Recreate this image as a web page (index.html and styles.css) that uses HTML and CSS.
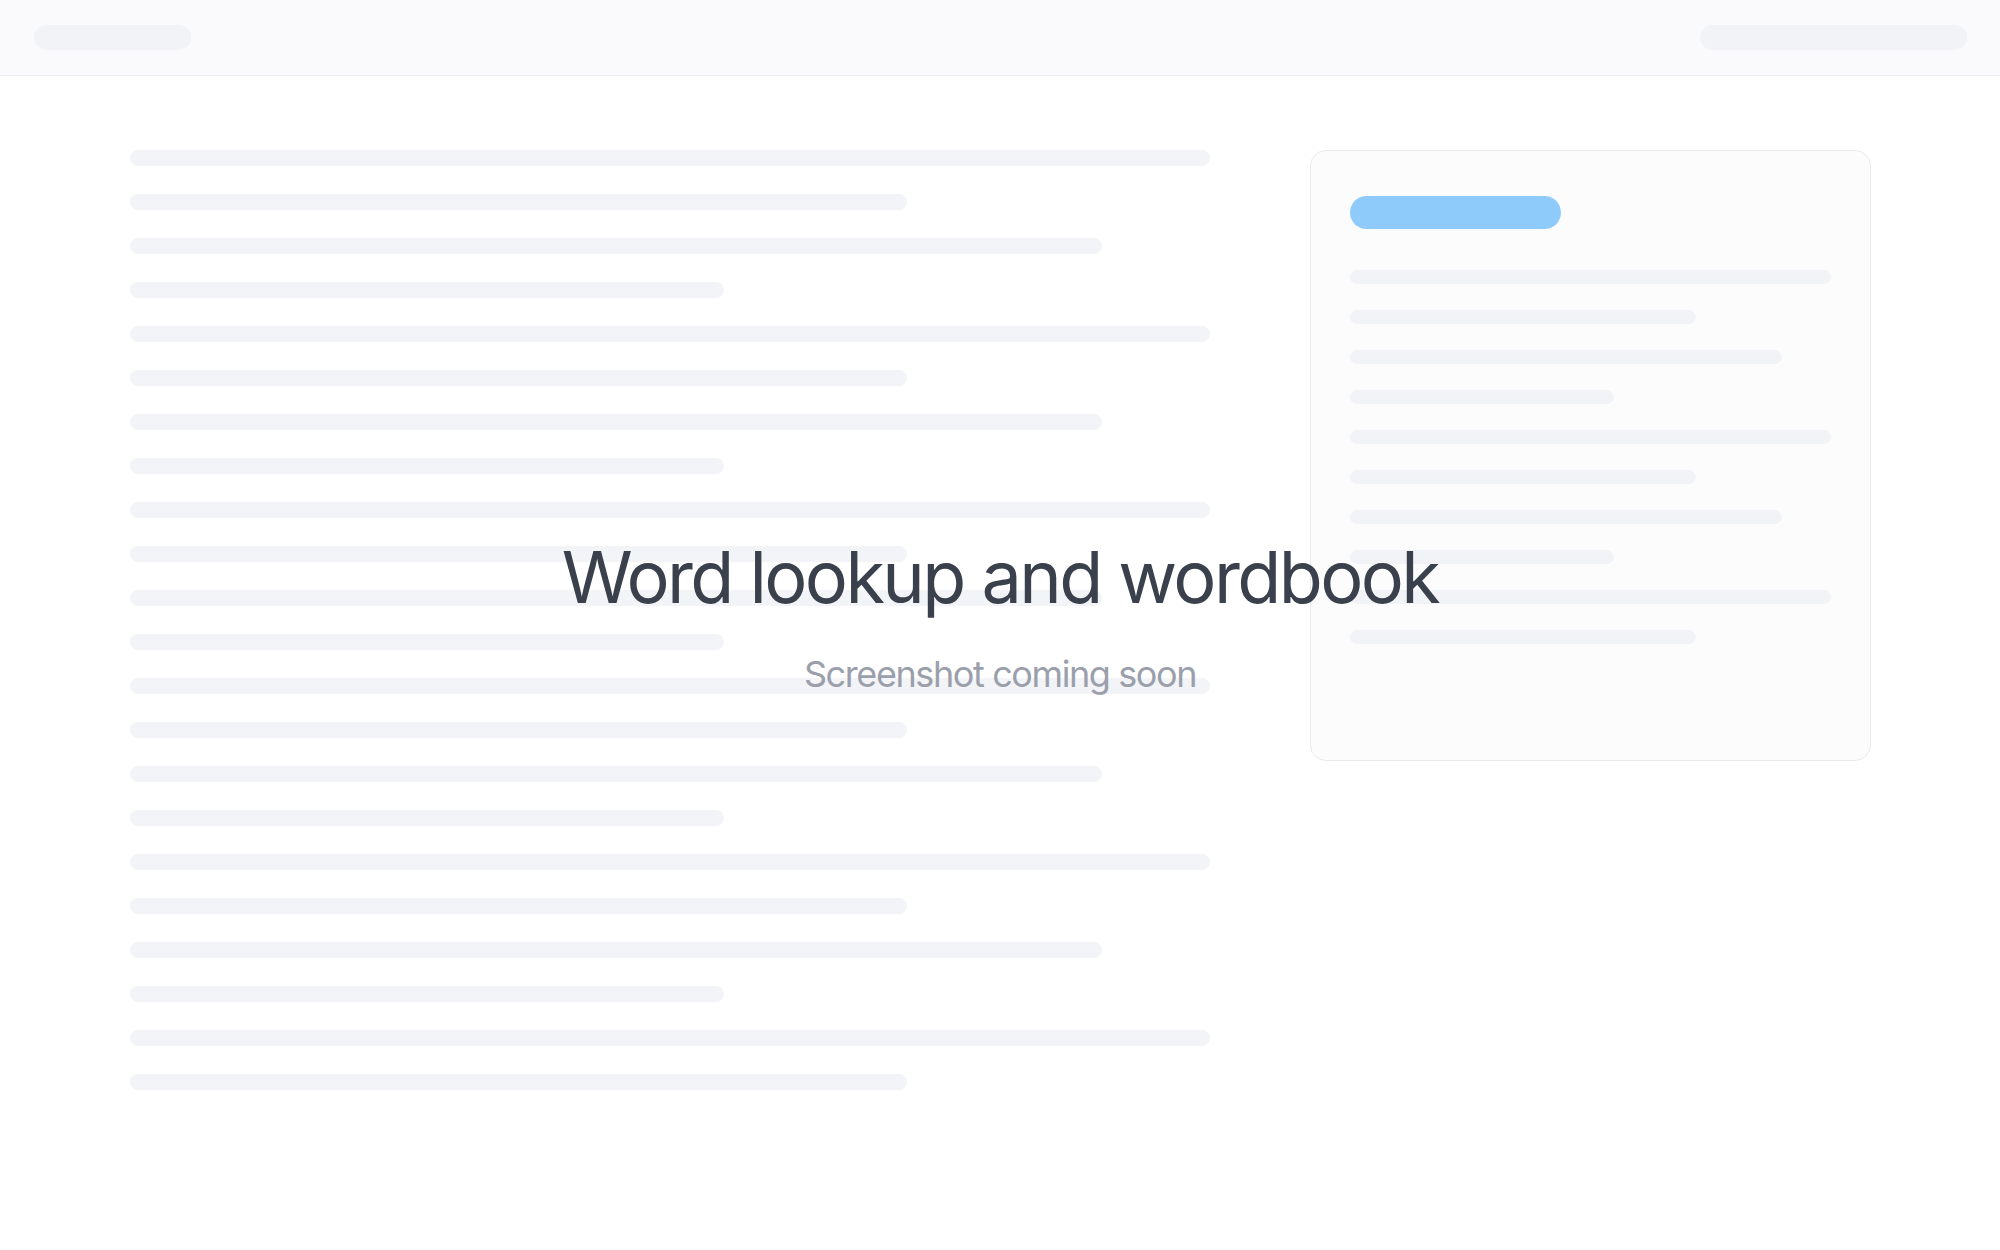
FILE: index.html
```html
<!DOCTYPE html>
<html lang="en">
<head>
<meta charset="utf-8">
<title>Word lookup and wordbook</title>
<link rel="stylesheet" href="styles.css">
</head>
<body>
<header class="topbar">
  <div class="pill pill-brand"></div>
  <div class="pill pill-nav"></div>
</header>
<main class="layout">
  <section class="article">
    <div class="line w100"></div><div class="line w72"></div><div class="line w90"></div><div class="line w55"></div>
    <div class="line w100"></div><div class="line w72"></div><div class="line w90"></div><div class="line w55"></div>
    <div class="line w100"></div><div class="line w72"></div><div class="line w90"></div><div class="line w55"></div>
    <div class="line w100"></div><div class="line w72"></div><div class="line w90"></div><div class="line w55"></div>
    <div class="line w100"></div><div class="line w72"></div><div class="line w90"></div><div class="line w55"></div>
    <div class="line w100"></div><div class="line w72"></div>
  </section>
  <aside class="card">
    <div class="card-badge"></div>
    <div class="card-lines">
      <div class="cline w100"></div><div class="cline w72"></div><div class="cline w90"></div><div class="cline w55"></div>
      <div class="cline w100"></div><div class="cline w72"></div><div class="cline w90"></div><div class="cline w55"></div>
      <div class="cline w100"></div><div class="cline w72"></div>
    </div>
  </aside>
</main>
<div class="overlay">
  <h1 class="overlay-title">Word lookup and wordbook</h1>
  <p class="overlay-sub">Screenshot coming soon</p>
</div>
</body>
</html>
```
FILE: styles.css
```css
html, body {
  margin: 0;
  padding: 0;
  height: 100%;
}
body {
  background: #ffffff;
  font-family: Inter, "Noto Sans", "Liberation Sans", sans-serif;
  overflow: hidden;
  position: relative;
}
.topbar {
  height: 75px;
  border-bottom: 1px solid #ededf0;
  background: #fafafc;
  display: flex;
  align-items: center;
  justify-content: space-between;
  padding: 0 33px 0 34px;
}
.pill {
  height: 25px;
  border-radius: 999px;
  background: #f2f3f6;
}
.pill-brand { width: 157px; }
.pill-nav { width: 267px; }

.layout {
  width: 1741px;
  margin: 0 auto;
  padding-top: 74px;
  display: grid;
  grid-template-columns: 1080px 561px;
  column-gap: 100px;
  align-items: start;
}
.article {
  display: flex;
  flex-direction: column;
  gap: 28px;
}
.line {
  height: 16px;
  border-radius: 8px;
  background: #f3f4f7;
}
.w100 { width: 100%; }
.w72 { width: 72%; }
.w90 { width: 90%; }
.w55 { width: 55%; }

.card {
  box-sizing: border-box;
  height: 611px;
  border: 1px solid #ebebef;
  border-radius: 16px;
  background: #fcfcfd;
  padding: 45px 39px 0 39px;
}
.card-badge {
  width: 211px;
  height: 33px;
  border-radius: 999px;
  background: #8fcbfa;
}
.card-lines {
  margin-top: 41px;
  display: flex;
  flex-direction: column;
  gap: 26px;
}
.cline {
  height: 14px;
  border-radius: 7px;
  background: #f2f3f6;
}

.overlay {
  position: absolute;
  inset: 0;
  display: flex;
  flex-direction: column;
  align-items: center;
  justify-content: center;
  padding-bottom: 21px;
  box-sizing: border-box;
  text-align: center;
}
.overlay-title {
  margin: 0;
  font-size: 72px;
  line-height: 88px;
  font-weight: 400;
  color: #3a404c;
  letter-spacing: -2.6px;
}
.overlay-sub {
  margin: 31px 0 0 0;
  font-size: 36px;
  line-height: 44px;
  color: #9a9fab;
  letter-spacing: -1.4px;
}
```
